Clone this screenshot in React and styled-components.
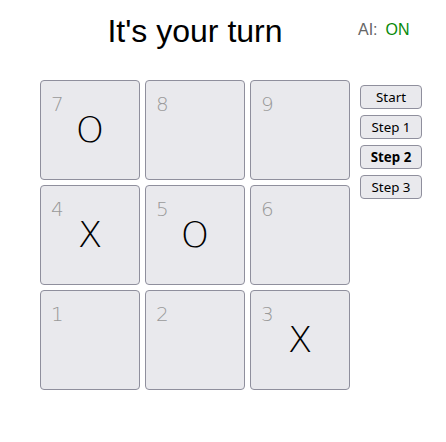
import styled, { createGlobalStyle } from "styled-components";

const GlobalStyle = createGlobalStyle`
  body {
    margin: 0;
    background: #ffffff;
    font-family: "Liberation Sans", Arial, sans-serif;
  }
`;

const Page = styled.div`
  display: flex;
  align-items: flex-start;
  gap: 10px;
  padding: 13px 0 0 40px;
`;

const GameColumn = styled.div`
  display: flex;
  flex-direction: column;
  width: 310px;
`;

const Title = styled.h1`
  margin: 0;
  font-size: 32px;
  font-weight: normal;
  line-height: 37px;
  text-align: center;
  color: #000;
`;

const Board = styled.div`
  display: grid;
  grid-template-columns: repeat(3, 100px);
  grid-auto-rows: 100px;
  gap: 5px;
  margin-top: 30px;
`;

const Cell = styled.button`
  position: relative;
  display: flex;
  align-items: center;
  justify-content: center;
  padding: 0;
  background: #e9e9ed;
  border: 1px solid #8f8f9d;
  border-radius: 4px;
  font-family: "DejaVu Sans", sans-serif;
  font-weight: 200;
  font-size: 36px;
  line-height: 1;
  color: #000;
`;

const CellNumber = styled.span`
  position: absolute;
  top: 12px;
  left: 10px;
  font-size: 20px;
  line-height: 23px;
  color: #999;
`;

const SideColumn = styled.div`
  display: flex;
  flex-direction: column;
  padding-top: 8px;
`;

const AiStatus = styled.div`
  margin-left: -2px;
  font-size: 16px;
  line-height: 18px;
  color: #666;
`;

const AiState = styled.span`
  margin-left: 8px;
  color: ${(p) => (p.$on ? "#0a8a0a" : "#b00")};
`;

const History = styled.ol`
  display: flex;
  flex-direction: column;
  gap: 6px;
  margin: 46px 0 0;
  padding: 0;
  list-style: none;
`;

const StepButton = styled.button`
  width: 62px;
  height: 24px;
  padding: 0;
  background: #e9e9ed;
  border: 1px solid #8f8f9d;
  border-radius: 4px;
  font-family: "Noto Sans", "Open Sans", sans-serif;
  font-size: 13.33px;
  font-weight: ${(p) => (p.$current ? "bold" : "normal")};
  color: #000;
`;

const cells = [
  { n: 7, mark: "O" },
  { n: 8, mark: "" },
  { n: 9, mark: "" },
  { n: 4, mark: "X" },
  { n: 5, mark: "O" },
  { n: 6, mark: "" },
  { n: 1, mark: "" },
  { n: 2, mark: "" },
  { n: 3, mark: "X" },
];

const steps = ["Start", "Step 1", "Step 2", "Step 3"];

export default function App() {
  return (
    <>
      <GlobalStyle />
      <Page>
        <GameColumn>
          <Title>It's your turn</Title>
          <Board>
            {cells.map((c) => (
              <Cell key={c.n}>
                <CellNumber>{c.n}</CellNumber>
                {c.mark}
              </Cell>
            ))}
          </Board>
        </GameColumn>
        <SideColumn>
          <AiStatus>
            AI:<AiState $on>ON</AiState>
          </AiStatus>
          <History>
            {steps.map((s, i) => (
              <li key={s}>
                <StepButton $current={i === 2}>{s}</StepButton>
              </li>
            ))}
          </History>
        </SideColumn>
      </Page>
    </>
  );
}
